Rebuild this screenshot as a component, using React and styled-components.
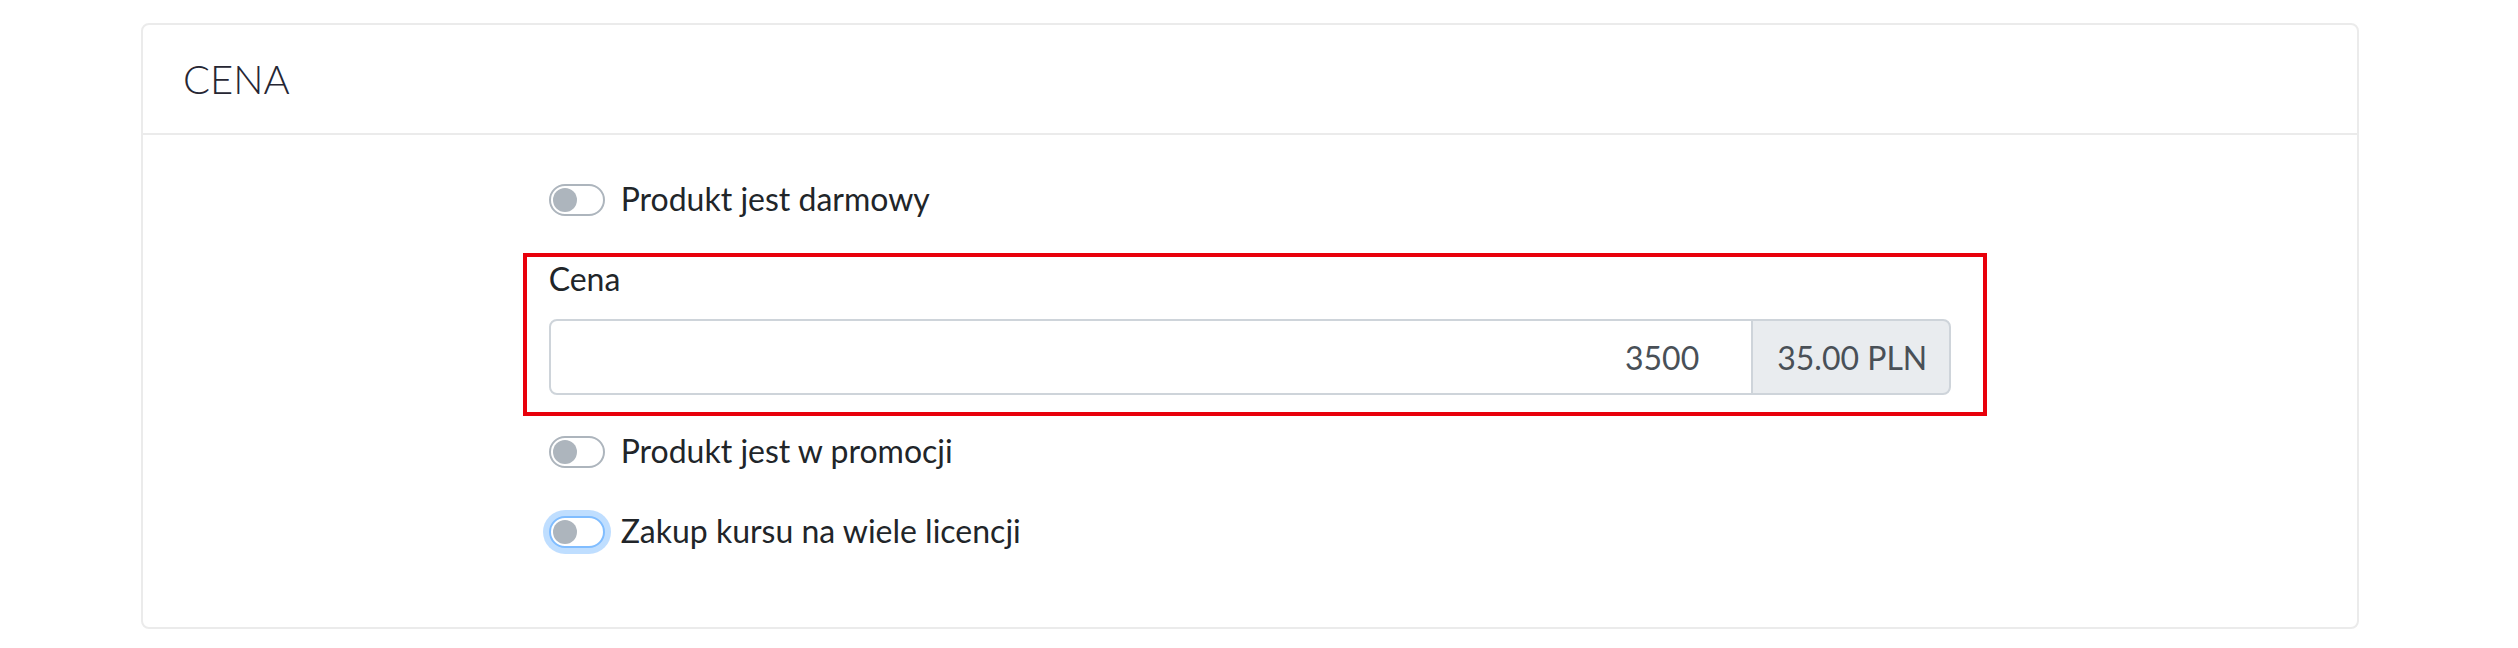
import React from 'react';
import styled, { createGlobalStyle } from 'styled-components';

const GlobalStyle = createGlobalStyle`
  body {
    margin: 0;
    background: #fff;
    font-family: Lato, 'Noto Sans', sans-serif;
    color: #212529;
  }
`;

const Page = styled.div`
  padding: 23px 159px 18px 141px;
`;

const Card = styled.section`
  border: 2px solid #ebebeb;
  border-radius: 8px;
  background: #fff;
`;

const CardHeader = styled.header`
  padding: 24px 40px;
  border-bottom: 2px solid #ebebeb;
`;

const Title = styled.h4`
  margin: 0;
  font-size: 40px;
  font-weight: 300;
  line-height: 1.5;
  color: #262633;
`;

const CardBody = styled.div`
  padding: 40px;
`;

const Row = styled.div`
  display: flex;
  margin: 0 -30px;
`;

const Col = styled.div`
  margin-left: 16.6667%;
  width: 66.6667%;
  padding: 0 30px;
  box-sizing: border-box;
`;

const FormGroup = styled.div`
  position: relative;
  margin-bottom: 32px;

  ${(p) =>
    p.$marked &&
    `
    &::after {
      content: '';
      position: absolute;
      top: -2px;
      bottom: -21px;
      left: -26px;
      right: -36px;
      border: 4px solid #e8000b;
      pointer-events: none;
    }
  `}
`;

const Switch = styled.label`
  position: relative;
  display: block;
  min-height: 48px;
  padding-left: 72px;
  font-size: 32px;
  line-height: 48px;
  color: #212529;

  &::before {
    content: '';
    position: absolute;
    left: 0;
    top: 9px;
    width: 56px;
    height: 32px;
    box-sizing: border-box;
    border-radius: 16px;
    border: 2px solid ${(p) => (p.$focused ? '#80bdff' : '#adb5bd')};
    background: #fff;
    box-shadow: ${(p) => (p.$focused ? '0 0 0 6px rgba(0, 123, 255, 0.25)' : 'none')};
  }

  &::after {
    content: '';
    position: absolute;
    left: 4px;
    top: 13px;
    width: 24px;
    height: 24px;
    border-radius: 50%;
    background: #adb5bd;
  }
`;

const Label = styled.label`
  display: block;
  margin-bottom: 16px;
  font-size: 32px;
  line-height: 48px;
`;

const InputGroup = styled.div`
  display: flex;
  align-items: stretch;
`;

const Input = styled.input`
  flex: 1;
  min-width: 0;
  height: 76px;
  box-sizing: border-box;
  padding: 12px 52px 12px 24px;
  border: 2px solid #ced4da;
  border-radius: 8px 0 0 8px;
  font-family: Lato, 'Noto Sans', sans-serif;
  font-size: 32px;
  color: #495057;
  text-align: right;
  outline: none;
`;

const Addon = styled.span`
  display: flex;
  align-items: center;
  padding: 12px 22px 12px 24px;
  margin-left: -2px;
  border: 2px solid #ced4da;
  border-radius: 0 8px 8px 0;
  background: #e9ecef;
  font-size: 32px;
  color: #495057;
  white-space: nowrap;
`;

export default function App() {
  return (
    <Page>
      <GlobalStyle />
      <Card>
        <CardHeader>
          <Title>CENA</Title>
        </CardHeader>
        <CardBody>
          <Row>
            <Col>
              <FormGroup>
                <Switch>Produkt jest darmowy</Switch>
              </FormGroup>
              <FormGroup $marked>
                <Label>Cena</Label>
                <InputGroup>
                  <Input type="text" defaultValue="3500" />
                  <Addon>35.00 PLN</Addon>
                </InputGroup>
              </FormGroup>
              <FormGroup>
                <Switch>Produkt jest w promocji</Switch>
              </FormGroup>
              <FormGroup>
                <Switch $focused>Zakup kursu na wiele licencji</Switch>
              </FormGroup>
            </Col>
          </Row>
        </CardBody>
      </Card>
    </Page>
  );
}
